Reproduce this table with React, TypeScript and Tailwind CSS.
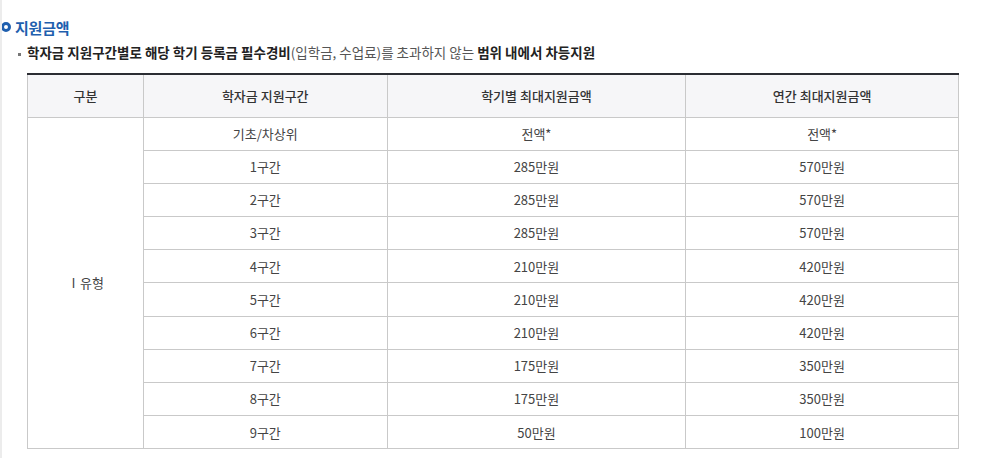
import React from "react";

const rows: [string, string, string][] = [
  ["기초/차상위", "전액*", "전액*"],
  ["1구간", "285만원", "570만원"],
  ["2구간", "285만원", "570만원"],
  ["3구간", "285만원", "570만원"],
  ["4구간", "210만원", "420만원"],
  ["5구간", "210만원", "420만원"],
  ["6구간", "210만원", "420만원"],
  ["7구간", "175만원", "350만원"],
  ["8구간", "175만원", "350만원"],
  ["9구간", "50만원", "100만원"],
];

export default function App() {
  return (
    <div
      className="w-[982px] h-[458px] bg-white overflow-hidden border-l-2 border-[#ececec]"
      style={{ fontFamily: '"Noto Sans CJK KR", "Noto Sans", sans-serif' }}
    >
      <div className="pt-[16px] pl-0">
        <div className="flex items-center h-[22px]">
          <span className="ml-[-1px] w-[10px] h-[10px] rounded-full border-[3px] border-[#1f5fae] mr-[4px]" />
          <span className="text-[15px] font-bold text-[#1f5fae] leading-none tracking-[-0.2px]">지원금액</span>
        </div>
        <div className="flex items-center h-[20px] mt-[5px] pl-[16px]">
          <span className="w-[3px] h-[3px] bg-[#777] mr-[6px] mt-[2px]" />
          <span className="text-[13.5px] text-[#555] leading-none">
            <b className="text-[#222] font-bold">학자금 지원구간별로 해당 학기 등록금 필수경비</b>
            (입학금, 수업료)를 초과하지 않는{" "}
            <b className="text-[#222] font-bold">범위 내에서 차등지원</b>
          </span>
        </div>
        <table className="ml-[25px] mt-[10px] w-[932px] border-collapse border-t-2 border-t-[#2b2d33] text-[13px] text-[#444]">
          <colgroup>
            <col className="w-[116px]" />
            <col className="w-[244px]" />
            <col className="w-[299px]" />
            <col className="w-[273px]" />
          </colgroup>
          <thead>
            <tr className="h-[43px] bg-[#f6f6f8]">
              {["구분", "학자금 지원구간", "학기별 최대지원금액", "연간 최대지원금액"].map((h) => (
                <th key={h} className="border border-[#c9c9c9] border-t-[#2b2d33] border-t-2 font-medium text-[#333] text-center">
                  {h}
                </th>
              ))}
            </tr>
          </thead>
          <tbody>
            {rows.map((r, i) => (
              <tr key={i} className="h-[33.2px]">
                {i === 0 && (
                  <td rowSpan={10} className="border border-[#c9c9c9] text-center">
                    Ⅰ유형
                  </td>
                )}
                {r.map((c, j) => (
                  <td key={j} className="border border-[#c9c9c9] text-center">
                    {c}
                  </td>
                ))}
              </tr>
            ))}
          </tbody>
        </table>
      </div>
    </div>
  );
}
